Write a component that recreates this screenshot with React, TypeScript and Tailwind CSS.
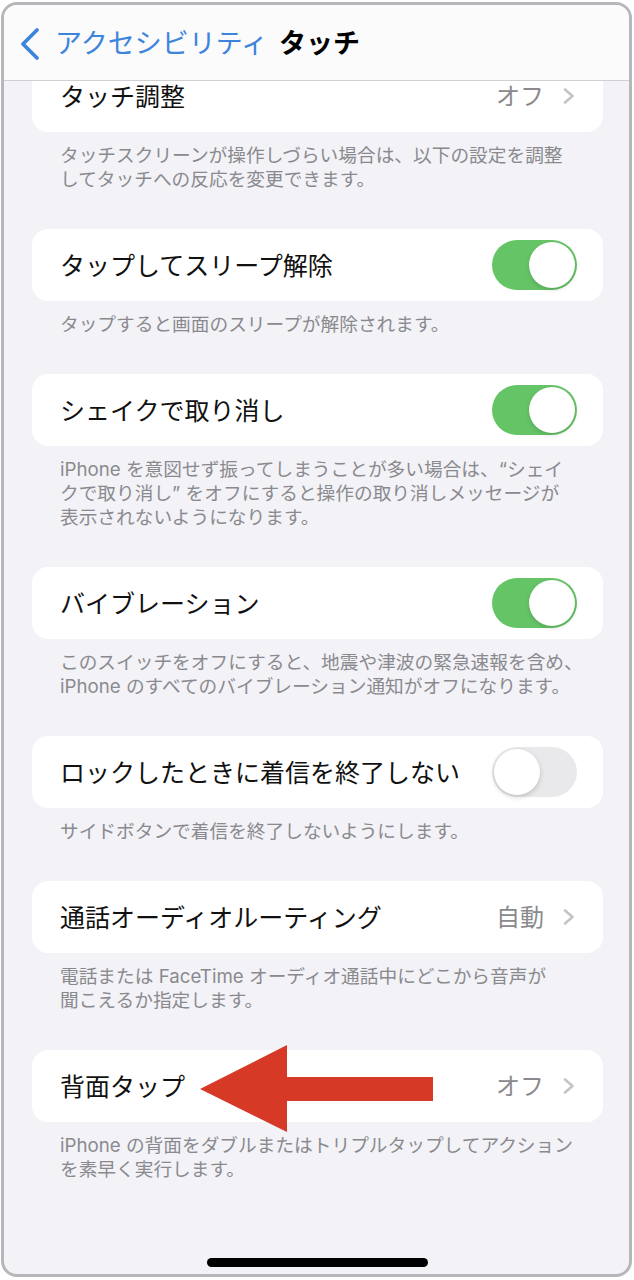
import React from "react";

const FONT = "font-['Inter','Noto_Sans_CJK_JP',sans-serif]";

function Chevron() {
  return (
    <svg width="14" height="20" viewBox="0 0 14 20" className="shrink-0">
      <polyline
        points="3,3.5 10.5,10 3,16.5"
        fill="none"
        stroke="#c4c4c7"
        strokeWidth="2.6"
        strokeLinecap="round"
        strokeLinejoin="round"
      />
    </svg>
  );
}

function Toggle({ on }: { on: boolean }) {
  return on ? (
    <div className="w-[85px] h-[50px] rounded-full bg-[#65c466] flex items-center justify-end pr-[2px] shrink-0">
      <div className="w-[46px] h-[46px] rounded-full bg-white shadow-[0_2px_4px_rgba(0,0,0,0.15)]" />
    </div>
  ) : (
    <div className="w-[85px] h-[50px] rounded-full bg-[#e9e9eb] flex items-center justify-start pl-[2px] shrink-0">
      <div className="w-[46px] h-[46px] rounded-full bg-white shadow-[0_2px_5px_rgba(0,0,0,0.18)]" />
    </div>
  );
}

type Row = {
  label: string;
  value?: string;
  toggle?: boolean;
  footer: string[];
};

const rows: Row[] = [
  {
    label: "タッチ調整",
    value: "オフ",
    footer: [
      "タッチスクリーンが操作しづらい場合は、以下の設定を調整",
      "してタッチへの反応を変更できます。",
    ],
  },
  {
    label: "タップしてスリープ解除",
    toggle: true,
    footer: ["タップすると画面のスリープが解除されます。"],
  },
  {
    label: "シェイクで取り消し",
    toggle: true,
    footer: [
      "iPhone を意図せず振ってしまうことが多い場合は、“シェイ",
      "クで取り消し” をオフにすると操作の取り消しメッセージが",
      "表示されないようになります。",
    ],
  },
  {
    label: "バイブレーション",
    toggle: true,
    footer: [
      "このスイッチをオフにすると、地震や津波の緊急速報を含め、",
      "iPhone のすべてのバイブレーション通知がオフになります。",
    ],
  },
  {
    label: "ロックしたときに着信を終了しない",
    toggle: false,
    footer: ["サイドボタンで着信を終了しないようにします。"],
  },
  {
    label: "通話オーディオルーティング",
    value: "自動",
    footer: [
      "電話または FaceTime オーディオ通話中にどこから音声が",
      "聞こえるか指定します。",
    ],
  },
  {
    label: "背面タップ",
    value: "オフ",
    footer: [
      "iPhone の背面をダブルまたはトリプルタップしてアクション",
      "を素早く実行します。",
    ],
  },
];

export default function App() {
  return (
    <div className={`w-[634px] h-[1280px] bg-white pt-[2px] pl-[1px] ${FONT}`}>
      <div className="relative w-[631px] h-[1275px] border-[3px] border-[#b7b7bb] rounded-[16px] overflow-hidden bg-[#f2f2f7]">
        {/* content */}
        <div className="flex flex-col pt-[55px] pl-[28px] pr-[26px]">
          {rows.map((r, i) => (
            <div key={i} className="flex flex-col">
              <div className="h-[72px] rounded-[16px] bg-white flex items-center justify-between pl-[28px] pr-[26px]">
                <span className="text-[25px] leading-none text-[#111] whitespace-nowrap pt-[2px]">
                  {r.label}
                </span>
                {r.value !== undefined ? (
                  <div className="flex items-center gap-[18px] pr-[1px]">
                    <span className="text-[24px] leading-none text-[#8a8a8e] whitespace-nowrap pt-[2px]">
                      {r.value}
                    </span>
                    <Chevron />
                  </div>
                ) : (
                  <Toggle on={!!r.toggle} />
                )}
              </div>
              <div className="pt-[12px] pb-[37px] pl-[28px] text-[18.7px] leading-[24px] text-[#8a8a8e]">
                {r.footer.map((line, j) => (
                  <div key={j} className="whitespace-nowrap">
                    {line}
                  </div>
                ))}
              </div>
            </div>
          ))}
        </div>

        {/* nav bar */}
        <div className="absolute top-0 left-0 right-0 h-[76px] bg-[#fbfbfb] border-b border-[#d0d0d4] flex items-center pl-[14px] pt-[2px]">
          <svg width="24" height="34" viewBox="0 0 24 34" className="shrink-0">
            <polyline
              points="19,3 5,17 19,31"
              fill="none"
              stroke="#3d84dc"
              strokeWidth="3.8"
              strokeLinecap="round"
              strokeLinejoin="round"
            />
          </svg>
          <span className="ml-[13px] text-[27px] leading-none text-[#3d84dc] whitespace-nowrap">
            アクセシビリティ
          </span>
          <span className="ml-[11px] text-[27px] leading-none font-bold text-black whitespace-nowrap">
            タッチ
          </span>
        </div>

        {/* red arrow annotation */}
        <svg
          className="absolute left-[196px] top-[1040px]"
          width="233"
          height="87"
          viewBox="0 0 233 87"
        >
          <polygon
            points="0,44 87,0 87,32 233,32 233,56 87,56 87,87"
            fill="#d63a27"
          />
        </svg>

        {/* home indicator */}
        <div className="absolute left-[203px] bottom-[7px] w-[221px] h-[9px] rounded-full bg-black" />
      </div>
    </div>
  );
}
